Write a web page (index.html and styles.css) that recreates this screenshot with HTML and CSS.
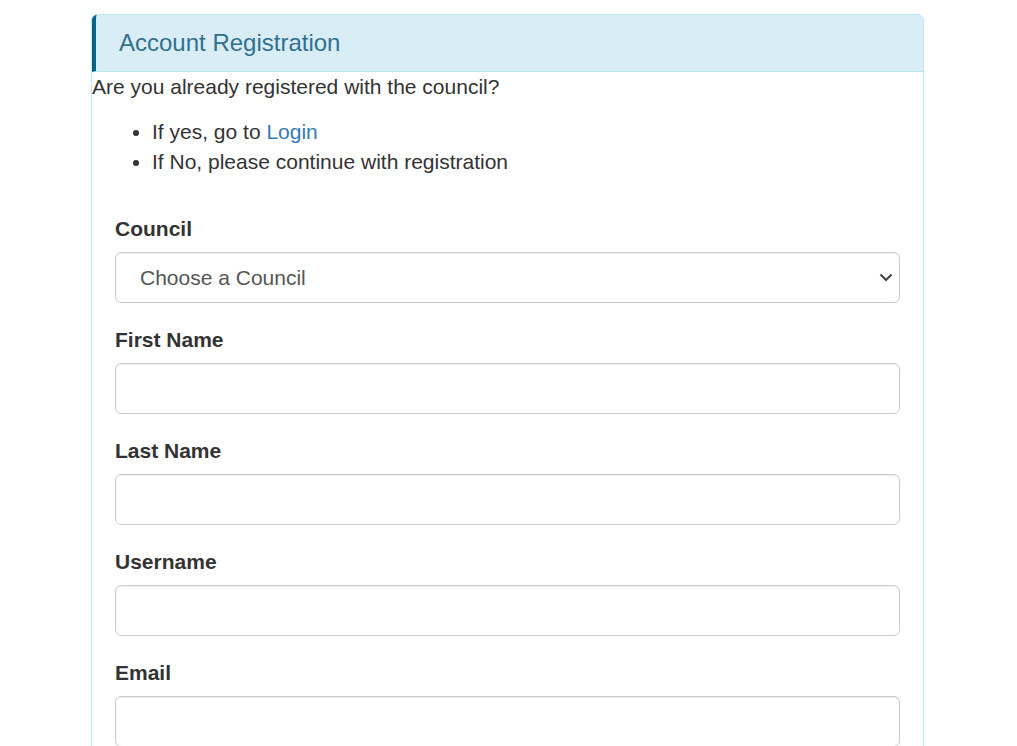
FILE: index.html
```
<!DOCTYPE html>
<html lang="en">
<head>
    <meta charset="UTF-8">
    <meta name="viewport" content="width=device-width, initial-scale=1.0">
    <title>Account Registration</title>
    <link rel="stylesheet" href="styles.css">
</head>
<body>

    <div class="panel">
        <div class="panel-heading">
            <h3 class="panel-title">Account Registration</h3>
        </div>
        <div class="panel-body">
            <p class="intro">Are you already registered with the council?</p>
            <ul class="choices">
                <li>If yes, go to <a href="#">Login</a></li>
                <li>If No, please continue with registration</li>
            </ul>

            <form class="reg-form">
                <div class="form-group">
                    <label for="council">Council</label>
                    <div class="select-wrap">
                        <select id="council" class="form-control">
                            <option>Choose a Council</option>
                        </select>
                        <svg class="chevron" width="14" height="9" viewBox="0 0 14 9">
                            <path d="M1.5 1.5 L7 7 L12.5 1.5" fill="none" stroke="#444" stroke-width="2"/>
                        </svg>
                    </div>
                </div>
                <div class="form-group">
                    <label for="first-name">First Name</label>
                    <input id="first-name" type="text" class="form-control">
                </div>
                <div class="form-group">
                    <label for="last-name">Last Name</label>
                    <input id="last-name" type="text" class="form-control">
                </div>
                <div class="form-group">
                    <label for="username">Username</label>
                    <input id="username" type="text" class="form-control">
                </div>
                <div class="form-group">
                    <label for="email">Email</label>
                    <input id="email" type="email" class="form-control">
                </div>
            </form>
        </div>
    </div>

</body>
</html>
```

FILE: styles.css
```
body {
    margin: 0;
    padding: 14px 0 0 91px;
    background-color: #fff;
    color: #333;
    font-family: "Liberation Sans", Arial, sans-serif;
    font-size: 21px;
    line-height: 30px;
}
.panel {
    width: 831px;
    border: 1px solid #bce8f1;
    border-radius: 6px;
    background-color: #fff;
}
.panel-heading {
    background-color: #d9edf7;
    border-bottom: 1px solid #bce8f1;
    border-left: 4px solid #0b6486;
    border-top-left-radius: 5px;
    border-top-right-radius: 5px;
    padding: 15px 22px 15px 23px;
}
.panel-title {
    margin: 0;
    font-size: 24px;
    font-weight: normal;
    line-height: 26.4px;
    color: #31708f;
}
.intro {
    margin: 0 0 15px 0;
}
.choices {
    margin: 0 0 15px 0;
    padding-left: 60px;
}
.choices a {
    color: #337ab7;
    text-decoration: none;
}
.reg-form {
    padding: 22px 23px 0 23px;
}
.form-group {
    margin-bottom: 22.5px;
}
.form-group label {
    display: block;
    font-weight: bold;
    margin-bottom: 7.5px;
}
.form-control {
    display: block;
    box-sizing: border-box;
    width: 100%;
    height: 51px;
    padding: 9px 18px;
    font-family: inherit;
    font-size: 21px;
    color: #555;
    background-color: #fff;
    border: 1px solid #ccc;
    border-radius: 6px;
    box-shadow: inset 0 1px 1px rgba(0, 0, 0, 0.075);
}
.select-wrap {
    position: relative;
}
select.form-control {
    appearance: none;
    -webkit-appearance: none;
    padding-left: 24px;
}
.chevron {
    position: absolute;
    right: 7px;
    top: 21px;
    pointer-events: none;
}
```
